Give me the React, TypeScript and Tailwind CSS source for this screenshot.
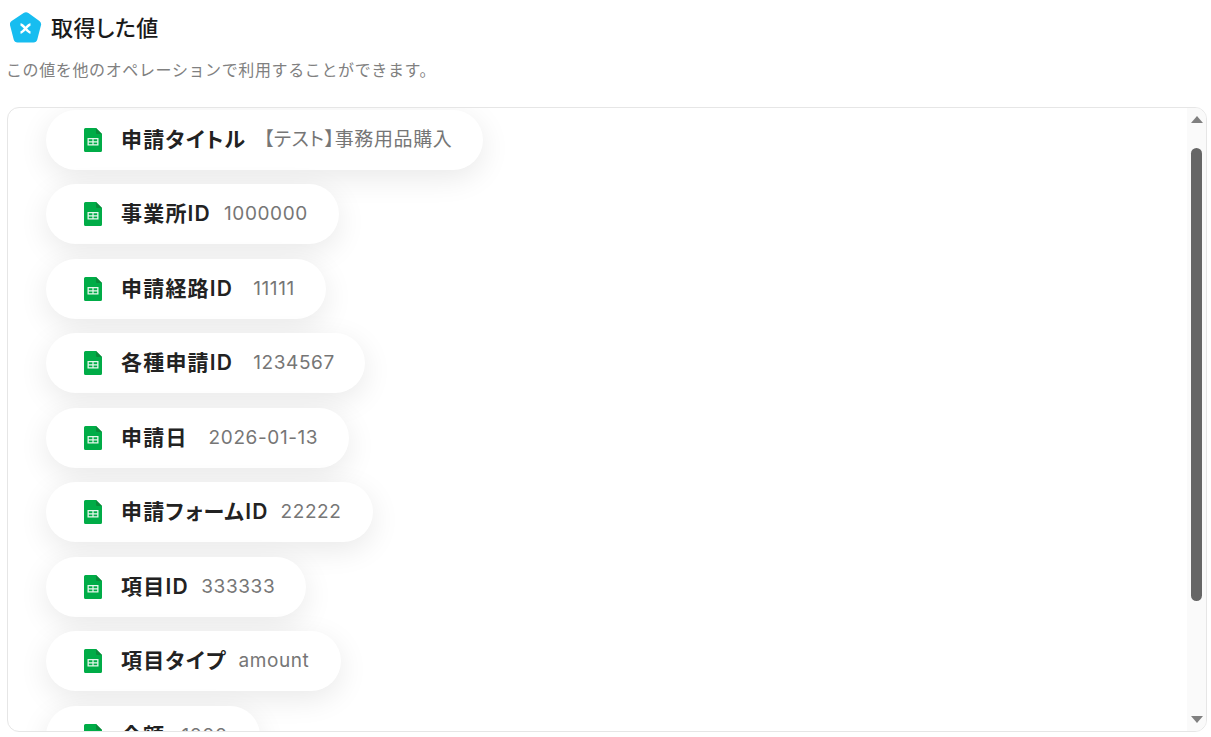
import React from 'react';

const rows = [
  { label: '申請タイトル', value: '【テスト】事務用品購入', gap: 'ml-[17.5px]', width: 'w-[437px]' },
  { label: '事業所ID', value: '1000000', gap: 'ml-[13px]', width: 'w-[293px]' },
  { label: '申請経路ID', value: '11111', gap: 'ml-[20px]', width: 'w-[280px]' },
  { label: '各種申請ID', value: '1234567', gap: 'ml-[20px]', width: 'w-[319px]' },
  { label: '申請日', value: '2026-01-13', gap: 'ml-[21px]', width: 'w-[303px]' },
  { label: '申請フォームID', value: '22222', gap: 'ml-[12px]', width: 'w-[327px]' },
  { label: '項目ID', value: '333333', gap: 'ml-[12.5px]', width: 'w-[260px]' },
  { label: '項目タイプ', value: 'amount', gap: 'ml-[12px]', width: 'w-[295px]' },
  { label: '金額', value: '1000', gap: 'ml-[16px]', width: 'w-[214px]' },
];

function SheetsIcon() {
  return (
    <svg width="18" height="24" viewBox="0 0 18 24" className="shrink-0">
      <path d="M1.5 0H12L18 6V22.5A1.5 1.5 0 0 1 16.5 24H1.5A1.5 1.5 0 0 1 0 22.5V1.5A1.5 1.5 0 0 1 1.5 0Z" fill="#00AC47" />
      <path d="M12 0L18 6H13.2A1.2 1.2 0 0 1 12 4.8Z" fill="#0A8A3A" />
      <path d="M3.5 10H14.5V17.5H3.5ZM4.8 11.2V13.2H8.4V11.2ZM9.6 11.2V13.2H13.2V11.2ZM4.8 14.4V16.3H8.4V14.4ZM9.6 14.4V16.3H13.2V14.4Z" fill="#E6F7EC" fillRule="evenodd" />
    </svg>
  );
}

function Logo() {
  return (
    <svg width="32" height="31" viewBox="0 0 32 31" className="shrink-0">
      <path d="M13.6 1.1a4 4 0 0 1 4.8 0l11 8a4 4 0 0 1 1.5 4.5l-3.6 14a4 4 0 0 1-3.9 3H7.6a4 4 0 0 1-3.9-3L.1 13.6A4 4 0 0 1 1.6 9.1Z" fill="#17BDF0" />
      <path d="M10.5 12.5C13.5 12.5 17.5 20.5 20.5 20.5M20.5 12.5C17.5 12.5 13.5 20.5 10.5 20.5" stroke="#fff" strokeWidth="2.6" fill="none" />
    </svg>
  );
}

export default function App() {
  return (
    <div className="h-[737px] overflow-hidden bg-white font-['Inter','Noto_Sans_CJK_JP',sans-serif] [font-feature-settings:'palt']">
      <div className="flex items-center gap-[9px] pl-[10px] pt-[12px]">
        <Logo />
        <h1 className="pt-[2px] text-[22px] leading-[29px] tracking-[0.4px] font-medium text-[#1a1a1a]">取得した値</h1>
      </div>
      <p className="ml-[6px] mt-[15px] text-[16px] leading-[24px] tracking-[0.62px] text-[#808080] [font-feature-settings:normal]">
        この値を他のオペレーションで利用することができます。
      </p>

      <div className="mx-[7px] mt-[25px] flex h-[625px] w-[1200px] overflow-hidden rounded-[12px] border border-[#e6e6e6]">
        <div className="flex min-w-0 flex-1 flex-col gap-[14.5px] overflow-hidden pl-[38px] pt-[1.6px]">
          {rows.map((row) => (
            <div
              key={row.label}
              className={`flex h-[60px] shrink-0 items-center rounded-[30px] bg-white pl-[38px] shadow-[0_8px_30px_rgba(0,0,0,0.09)] ${row.width}`}
            >
              <SheetsIcon />
              <span className="ml-[19px] whitespace-nowrap text-[21px] font-semibold leading-[30px] tracking-[1.2px] text-[#222222]">{row.label}</span>
              <span className={`whitespace-nowrap text-[19px] leading-[28px] tracking-[0.6px] text-[#767676] ${row.gap}`}>{row.value}</span>
            </div>
          ))}
        </div>
        {/* scrollbar */}
        <div className="relative flex w-[19px] shrink-0 flex-col items-center bg-[#fafafa]">
          <div className="mt-[8px] h-0 w-0 border-x-[6.5px] border-b-[7px] border-x-transparent border-b-[#808080]" />
          <div className="mt-[25px] h-[453px] w-[11px] rounded-[6px] bg-[#666666]" />
          <div className="mt-auto mb-[8px] h-0 w-0 border-x-[6.5px] border-t-[7px] border-x-transparent border-t-[#808080]" />
        </div>
      </div>
    </div>
  );
}
